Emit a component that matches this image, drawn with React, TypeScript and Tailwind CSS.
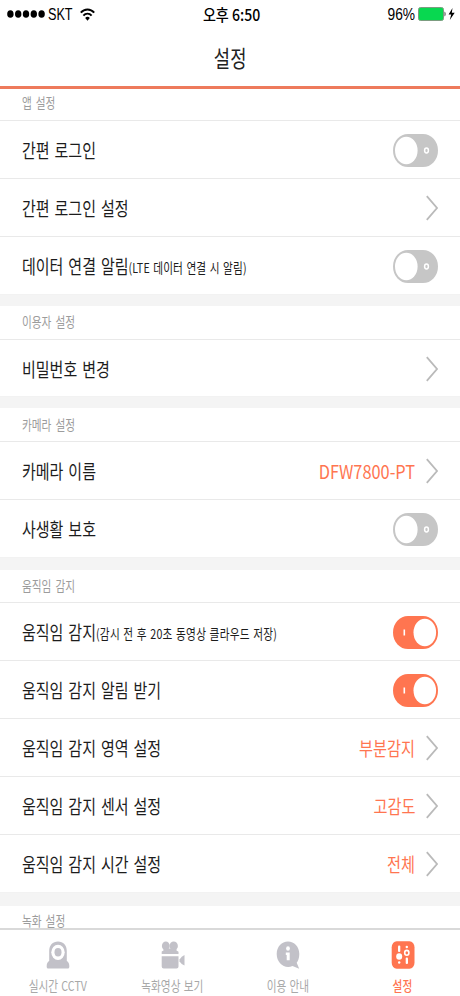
import React from 'react';
import clsx from 'clsx';

type Row = {
  label: string;
  note?: string;
  noteClass?: string;
  value?: string;
  valueClass?: string;
  toggle?: boolean;
};

type Section = {
  title: string;
  titleClass: string;
  rowClass: string;
  gapClass: string;
  rows: Row[];
};

const sections: Section[] = [
  {
    title: '앱 설정',
    titleClass: 'h-8 pb-[3px]',
    rowClass: 'h-[58px]',
    gapClass: 'h-[11px]',
    rows: [
      { label: '간편 로그인', toggle: false },
      { label: '간편 로그인 설정' },
      {
        label: '데이터 연결 알림',
        note: '(LTE 데이터 연결 시 알림)',
        noteClass: 'tracking-[0.2px]',
        toggle: false,
      },
    ],
  },
  {
    title: '이용자 설정',
    titleClass: 'h-[34px] pb-px',
    rowClass: 'h-[57px]',
    gapClass: 'h-[11px]',
    rows: [{ label: '비밀번호 변경' }],
  },
  {
    title: '카메라 설정',
    titleClass: 'h-[34px]',
    rowClass: 'h-[58px]',
    gapClass: 'h-3',
    rows: [
      { label: '카메라 이름', value: 'DFW7800-PT', valueClass: 'scale-x-[0.86]' },
      { label: '사생활 보호', toggle: false },
    ],
  },
  {
    title: '움직임 감지',
    titleClass: 'h-[33px]',
    rowClass: 'h-[58px]',
    gapClass: 'h-[13px]',
    rows: [
      {
        label: '움직임 감지',
        note: '(감시 전 후 20초 동영상 클라우드 저장)',
        noteClass: 'tracking-[0.3px]',
        toggle: true,
      },
      { label: '움직임 감지 알림 받기', toggle: true },
      { label: '움직임 감지 영역 설정', value: '부분감지' },
      { label: '움직임 감지 센서 설정', value: '고감도' },
      { label: '움직임 감지 시간 설정', value: '전체' },
    ],
  },
];

const Toggle: React.FC<{ on: boolean }> = ({ on }) => (
  <svg className="h-[33px] w-[45px] shrink-0" viewBox="0 0 45 33">
    <rect width="45" height="33" rx="15" ry="16.5" fill={on ? '#ff7550' : '#c6c6c6'} />
    <ellipse cx={on ? 31.8 : 13.3} cy="16.5" rx="11.3" ry="13.8" fill="#fff" />
    {on ? (
      <path d="M11.3 13.5v6" stroke="#fff" strokeWidth="1.6" />
    ) : (
      <ellipse cx="33.5" cy="16.5" rx="1.9" ry="2.4" fill="none" stroke="#fff" strokeWidth="1.5" />
    )}
  </svg>
);

const Chevron: React.FC = () => (
  <svg className="h-[26px] w-3 shrink-0" viewBox="0 0 12 26" fill="none" stroke="#bababa" strokeWidth="1.8">
    <path d="M.8 1.2 11 13 .8 24.8" />
  </svg>
);

const SectionTitle: React.FC<{ title: string; className: string }> = ({ title, className }) => (
  <div className={clsx('flex shrink-0 items-center pl-[22px]', className)}>
    <h2 className="origin-left scale-x-[0.79] text-[13.5px] leading-none whitespace-nowrap text-[#9c9c9c] [word-spacing:2px]">
      {title}
    </h2>
  </div>
);

const SettingRow: React.FC<{ row: Row; className: string; last: boolean }> = ({ row, className, last }) => (
  <div
    className={clsx(
      'flex items-center border-b px-[22px] pt-px',
      last ? 'border-[#f2f2f2]' : 'border-[#e9e9e9]',
      className
    )}
  >
    <div className="w-0 flex-1 origin-left scale-x-[0.79] pb-px text-[19px] leading-none whitespace-nowrap text-[#1c1c1c] [word-spacing:2px]">
      {row.label}
      {row.note && (
        <span className={clsx('align-[1px] text-[13.5px] [word-spacing:1px]', row.noteClass)}>{row.note}</span>
      )}
    </div>
    {row.value && (
      <div
        className={clsx(
          'mr-[11px] origin-right pb-px text-[19px] leading-none whitespace-nowrap text-[#ff7550]',
          row.valueClass ?? 'scale-x-[0.8]'
        )}
      >
        {row.value}
      </div>
    )}
    {row.toggle === undefined ? <Chevron /> : <Toggle on={row.toggle} />}
  </div>
);

const StatusBar: React.FC = () => (
  <div className="grid h-7 grid-cols-3 items-center text-[16px] leading-none text-black">
    <div className="flex items-center pl-[7px]">
      <svg className="h-2 w-[38px]" viewBox="0 0 38 8">
        {[3.4, 11.2, 19, 26.8, 34.6].map((x) => (
          <ellipse key={x} cx={x} cy="4" rx="3.2" ry="3.8" />
        ))}
      </svg>
      <span className="mt-[2px] ml-[3px] w-[26px] origin-left scale-x-[0.79] font-['Liberation_Sans']">SKT</span>
      <svg className="ml-1.5 h-[13px] w-[15px]" viewBox="0 0 15 13" fill="none" stroke="#000" strokeWidth="1.9">
        <path d="M.8 4.7C4.4.4 10.6.4 14.2 4.7M3.4 7.6c2.2-2.7 6-2.7 8.2 0" />
        <path d="M7.5 12.7 5.2 9.9c1.2-1.5 3.4-1.5 4.6 0z" fill="#000" stroke="none" />
      </svg>
    </div>
    <div className="flex justify-center pl-[3px]">
      <span className="scale-x-[0.88] text-[16px] font-medium whitespace-nowrap">오후 6:50</span>
    </div>
    <div className="flex items-center justify-end pr-[5px]">
      <span className="mt-[2px] origin-right scale-x-[0.86] font-['Liberation_Sans']">96%</span>
      <svg className="ml-[3px] h-[14px] w-[37px]" viewBox="0 0 37 14">
        <rect x=".5" y=".5" width="25" height="13" rx="2" fill="#08d850" stroke="#7c9c80" />
        <path d="M26.5 4.5c1.5.8 1.5 4.2 0 5z" fill="#444" />
        <path d="M34.5 1 30.6 7.6h2.6L31.8 13l4.9-7.2h-2.9z" />
      </svg>
    </div>
  </div>
);

const LiveIcon = () => (
  <svg className="h-7 w-6" viewBox="0 0 24 28">
    <path
      d="M3.2 20V10C3.2 4.300 6.800.500 12 .500S20.800 4.300 20.800 10v10c1.600.8 2.500 2.700 2.500 5v1q0 1.500-1.500 1.500H2.200Q.7 27.500.7 26v-1c0-2.300.900-4.200 2.500-5z"
      fill="#c2c1c8"
    />
    <ellipse cx="12" cy="11.3" rx="6.7" ry="7.6" fill="#fff" />
    <ellipse cx="12" cy="11.3" rx="3.5" ry="4.2" fill="#c2c1c8" />
  </svg>
);

// two reels on top of a striped body, lens on the right
const RecordIcon = () => (
  <svg className="h-7 w-6" viewBox="0 0 24 28" fill="#c2c1c8">
    <ellipse cx="4.8" cy="4.9" rx="3.9" ry="4.4" />
    <ellipse cx="12.7" cy="4.9" rx="4.2" ry="4.4" />
    <path d="M2.5 7.500h13v2l2 1.200V13H.7v-2.500l1.800-1zM.7 15.200h16.800v10.300q0 2-2 2H2.700q-2 0-2-2z" />
    <path d="M18.500 18.500q2-3.500 5-4.500v10.500q-3-1-5-4z" />
  </svg>
);

const GuideIcon = () => (
  <svg className="h-7 w-6" viewBox="0 0 24 28">
    <path
      d="M12 .5c6.300 0 11.300 5.200 11.300 12.500 0 4-1.200 7-2.600 8.800l2.500 6-6.700-2.700C8.400 28.300.7 22 .7 13 .7 5.700 5.700.5 12 .5z"
      fill="#c2c1c8"
    />
    <ellipse cx="12" cy="7.500" rx="1.900" ry="2.200" fill="#fff" />
    <path d="M9.800 11.500h3.900v7.800h-3v-5.200h-.9z" fill="#fff" />
  </svg>
);

const SettingsIcon = () => (
  <svg className="h-7 w-6" viewBox="0 0 24 28">
    <rect x=".7" y=".3" width="22.800" height="27.400" rx="5" ry="6" fill="#ff7550" />
    <g fill="#fff">
      <rect x="7" y="4.500" width="2.300" height="6.500" rx="1" />
      <ellipse cx="8.200" cy="15.500" rx="3" ry="3.200" />
      <ellipse cx="8.200" cy="21.500" rx="1.200" ry="1.300" />
      <ellipse cx="15.800" cy="6" rx="1.200" ry="1.300" />
      <rect x="14.700" y="16.500" width="2.300" height="6.500" rx="1" />
    </g>
    <ellipse cx="15.800" cy="11.800" rx="2.100" ry="2.400" fill="none" stroke="#fff" strokeWidth="1.6" />
  </svg>
);

const tabs = [
  { label: '실시간 CCTV', icon: <LiveIcon />, active: false },
  { label: '녹화영상 보기', icon: <RecordIcon />, active: false },
  { label: '이용 안내', icon: <GuideIcon />, active: false },
  { label: '설정', icon: <SettingsIcon />, active: true },
];

const TabBar: React.FC = () => (
  <nav className="grid h-[68px] shrink-0 grid-cols-4 border-t-2 border-[#d9d9d9]">
    {tabs.map((tab) => (
      <div key={tab.label} className="flex flex-col items-center pt-[11px]">
        {tab.icon}
        <span
          className={clsx(
            'mt-[10px] scale-x-[0.79] text-[13.5px] leading-none whitespace-nowrap [word-spacing:1px]',
            tab.active ? 'font-medium text-[#ff7550]' : 'text-[#a8a8a8]'
          )}
        >
          {tab.label}
        </span>
      </div>
    ))}
  </nav>
);

const App: React.FC = () => {
  return (
    <div className="flex h-[996px] w-[460px] flex-col overflow-hidden bg-white font-['Noto_Sans_CJK_KR',sans-serif]">
      <header className="h-[89px] shrink-0 border-b-3 border-[#ee7a5c]">
        <StatusBar />
        <div className="flex h-[58px] items-center justify-center pt-px">
          <h1 className="scale-x-[0.77] text-[23px] leading-none text-[#222]">설정</h1>
        </div>
      </header>
      <main className="flex min-h-0 flex-1 flex-col">
        {sections.map((section) => (
          <section key={section.title} className="shrink-0">
            <SectionTitle title={section.title} className={clsx('border-b border-[#e9e9e9]', section.titleClass)} />
            {section.rows.map((row, i) => (
              <SettingRow key={row.label} row={row} className={section.rowClass} last={i === section.rows.length - 1} />
            ))}
            <div className={clsx('bg-[#f4f4f4]', section.gapClass)} />
          </section>
        ))}
        <SectionTitle title="녹화 설정" className="h-[22px] pt-[7px]" />
      </main>
      <TabBar />
    </div>
  );
};

export default App;
